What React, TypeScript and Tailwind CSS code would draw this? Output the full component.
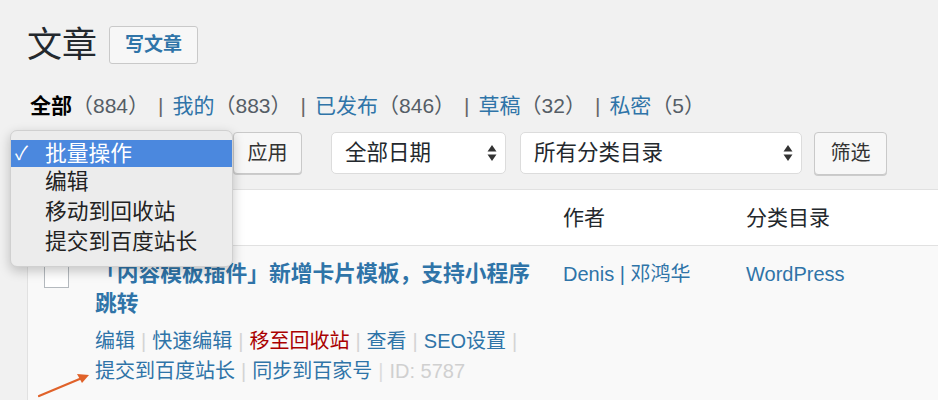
import React from "react";

const font = { fontFamily: '"Liberation Sans", "Noto Sans CJK SC", sans-serif' };

const SelectArrows = () => (
  <svg width="10" height="18" viewBox="0 0 10 18" className="shrink-0">
    <path d="M5 1 L9.5 7.5 L0.5 7.5 Z" fill="#333" />
    <path d="M5 17 L9.5 10.5 L0.5 10.5 Z" fill="#333" />
  </svg>
);

const Sep = ({ light }: { light?: boolean }) => (
  <span className={`mx-[6px] ${light ? "text-[#dcdcdc]" : "text-[#d4d4d4]"}`}>|</span>
);

const StatusSep = () => <span className="mx-[9px] text-[#666]">|</span>;

export default function App() {
  const bulkItems = ["编辑", "移动到回收站", "提交到百度站长"];

  return (
    <div className="relative w-[938px] h-[400px] overflow-hidden bg-[#f1f1f1] text-[#23282d]" style={font}>
      <div className="pl-[27px] pt-[24px]">
        {/* Header */}
        <div className="flex items-center h-[42px]">
          <h1 className="text-[35px] leading-[42px] font-normal text-[#23282d]">文章</h1>
          <button className="ml-[12px] h-[38px] px-[15px] border border-[#c9c9c9] rounded-[3px] bg-[#f7f7f7] text-[#2f74a8] text-[19px] font-semibold">
            写文章
          </button>
        </div>

        {/* Status links */}
        <div className="mt-[26px] flex items-center text-[21px] leading-[28px] pl-[3px]">
          <span className="font-bold text-black">全部</span>
          <span className="text-[#555d66]">（884）</span>
          <StatusSep />
          <span className="text-[#2f74a8]">我的</span>
          <span className="text-[#555d66]">（883）</span>
          <StatusSep />
          <span className="text-[#2f74a8]">已发布</span>
          <span className="text-[#555d66]">（846）</span>
          <StatusSep />
          <span className="text-[#2f74a8]">草稿</span>
          <span className="text-[#555d66]">（32）</span>
          <StatusSep />
          <span className="text-[#2f74a8]">私密</span>
          <span className="text-[#555d66]">（5）</span>
        </div>

        {/* Controls */}
        <div className="mt-[12px] flex items-center h-[42px]">
          <div className="w-[195px] h-[42px] rounded-[5px] border border-[#d6d6d6] bg-white" />
          <button className="ml-[11px] w-[69px] h-[42px] rounded-[4px] border border-[#c9c9c9] bg-[#f7f7f7] text-[20px] text-[#333] shadow-[0_1px_0_#ccc]">
            应用
          </button>
          <div className="ml-[29px] w-[175px] h-[42px] rounded-[5px] border border-[#dcdcdc] bg-white flex items-center justify-between pl-[13px] pr-[8px] text-[21.5px] text-[#23282d]">
            <span>全部日期</span>
            <SelectArrows />
          </div>
          <div className="ml-[14px] w-[282px] h-[42px] rounded-[5px] border border-[#dcdcdc] bg-white flex items-center justify-between pl-[13px] pr-[8px] text-[21.5px] text-[#23282d]">
            <span>所有分类目录</span>
            <SelectArrows />
          </div>
          <button className="ml-[12px] w-[73px] h-[43px] rounded-[4px] border border-[#c9c9c9] bg-[#f7f7f7] text-[20px] text-[#333] shadow-[0_1px_0_#ccc]">
            筛选
          </button>
        </div>

        {/* Table */}
        <div className="mt-[15px] border-l border-t border-[#e1e1e1]">
          <div className="h-[56px] bg-white border-b border-[#e1e1e1] flex items-center text-[21px] text-[#23282d]">
            <div className="w-[535px]" />
            <div className="w-[183px]">作者</div>
            <div>分类目录</div>
          </div>
          <div className="bg-[#f9f9f9] flex pt-[13px] h-[200px]">
            <div className="w-[67px] pl-[16px] pt-[4px]">
              <div className="w-[25px] h-[25px] border border-[#b4b9be] bg-white" />
            </div>
            <div className="w-[468px]">
              <div className="text-[21.75px] leading-[30px] font-bold text-[#2f74a8] whitespace-nowrap">
                「内容模板插件」新增卡片模板，支持小程序<br />跳转
              </div>
              <div className="mt-[7px] text-[20px] leading-[30px] text-[#2f74a8] whitespace-nowrap">
                <div>
                  编辑<Sep />快速编辑<Sep />
                  <span className="text-[#a00]">移至回收站</span>
                  <Sep />查看<Sep />SEO设置<Sep />
                </div>
                <div>
                  提交到百度站长<Sep />同步到百家号<Sep light />
                  <span className="text-[#d0d0d0]">ID: 5787</span>
                </div>
              </div>
            </div>
            <div className="w-[183px] text-[20px] leading-[30px] text-[#2f74a8]">Denis | 邓鸿华</div>
            <div className="text-[20px] leading-[30px] text-[#2f74a8]">WordPress</div>
          </div>
        </div>
      </div>

      {/* Open bulk actions dropdown */}
      <div className="absolute left-[10px] top-[130px] w-[223px] rounded-[7px] bg-[#ececec] border border-[#d0d0d0] shadow-[0_4px_12px_rgba(0,0,0,0.22)] py-[9px] text-[21.75px] leading-[30px] text-[#222]">
        <div className="h-[27px] bg-[#4b88de] text-white flex items-center pl-[4px]">
          <span className="w-[30px] text-[19px]">✓</span>
          <span>批量操作</span>
        </div>
        {bulkItems.map((item) => (
          <div key={item} className="pl-[34px]">{item}</div>
        ))}
      </div>

      {/* Annotation arrow */}
      <svg className="absolute left-0 top-0" width="938" height="400">
        <line x1="39" y1="396" x2="82" y2="378" stroke="#e0622a" strokeWidth="2.2" strokeLinecap="round" />
        <path d="M89 375 L77 374 L82 383 Z" fill="#e0622a" />
      </svg>
    </div>
  );
}
